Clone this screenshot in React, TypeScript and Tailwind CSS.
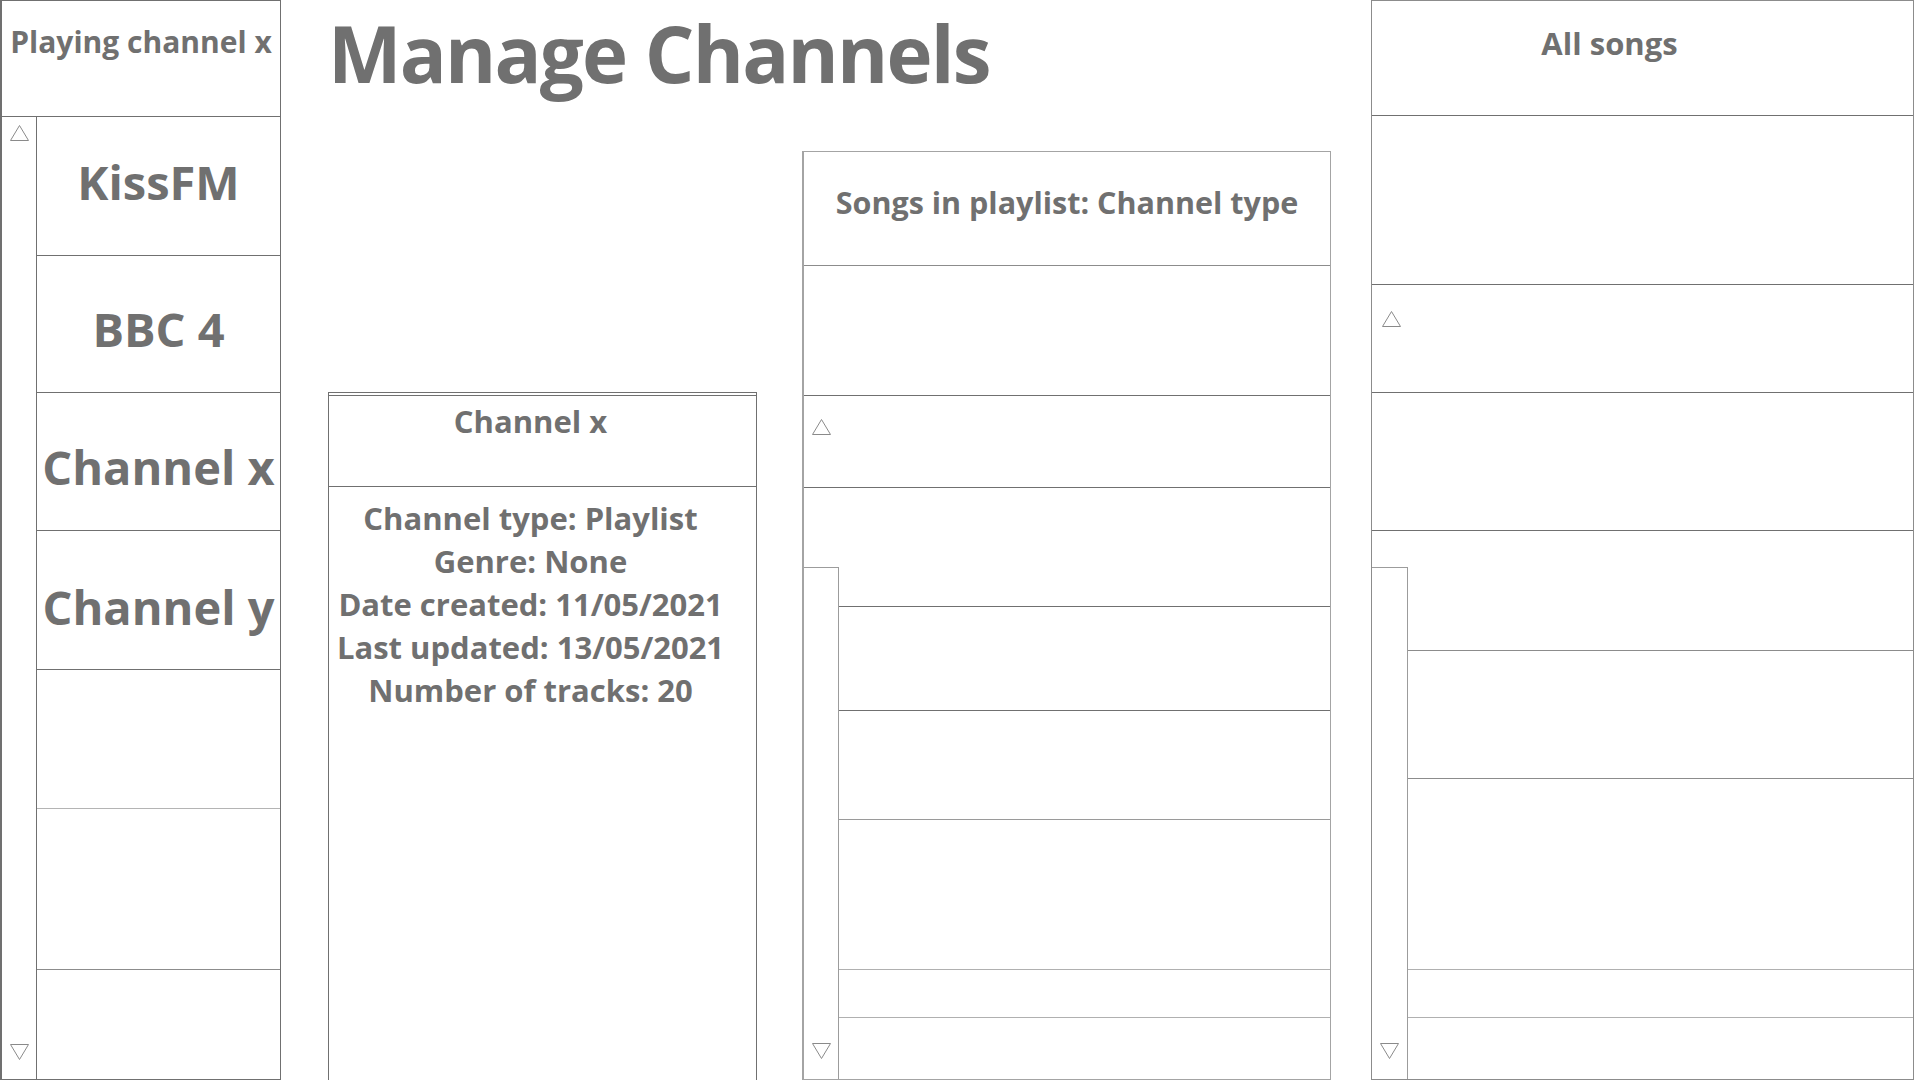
const UpArrow = () => (
  <svg width="19" height="16" viewBox="0 0 19 16" className="shrink-0">
    <polygon points="9.5,0.5 18.5,15.5 0.5,15.5" fill="none" stroke="#8a8a8a" strokeWidth="1" />
  </svg>
);

const DownArrow = () => (
  <svg width="19" height="16" viewBox="0 0 19 16" className="shrink-0">
    <polygon points="0.5,0.5 18.5,0.5 9.5,15.5" fill="none" stroke="#8a8a8a" strokeWidth="1" />
  </svg>
);

const channels = [
  { name: "KissFM", h: "h-[139px]", line: "border-[#707070]", pad: "pb-[8px]" },
  { name: "BBC 4", h: "h-[137px]", line: "border-[#707070]", pad: "pt-[10px]" },
  { name: "Channel x", h: "h-[138px]", line: "border-[#707070]", pad: "pt-[12px]" },
  { name: "Channel y", h: "h-[139px]", line: "border-[#707070]", pad: "pt-[14px]" },
  { name: "", h: "h-[139px]", line: "border-[#b4b4b4]", pad: "pt-0" },
  { name: "", h: "h-[161px]", line: "border-[#8c8c8c]", pad: "pt-0" },
];

const ChannelList = () => (
  <div className="w-[281px] h-full shrink-0 flex flex-col border border-l-2 border-[#707070]">
    <div className="h-[116px] shrink-0 border-b border-[#707070] pt-[26px] text-center text-[30px] font-bold leading-none">
      Playing channel x
    </div>
    <div className="flex flex-1 min-h-0">
      <div className="w-[35px] shrink-0 border-r border-[#707070] flex flex-col justify-between items-center pt-[8px] pb-[19px]">
        <UpArrow />
        <DownArrow />
      </div>
      <div className="flex-1 flex flex-col">
        {channels.map((c, i) => (
          <div
            key={i}
            className={`${c.h} ${c.pad} shrink-0 border-b ${c.line} flex items-center justify-center text-[47px] font-bold leading-none`}
          >
            {c.name}
          </div>
        ))}
        <div className="flex-1" />
      </div>
    </div>
  </div>
);

const ChannelInfo = () => (
  <div className="w-[429px] h-[688px] shrink-0 flex flex-col border-t border-x border-[#707070]">
    <div className="h-[92px] shrink-0 mt-[2px] border-t border-b border-[#707070] pt-[10px] pr-[24px] text-center text-[31px] font-bold leading-none">
      Channel x
    </div>
    <div className="pt-[10px] pr-[24px] text-center text-[31px] font-bold leading-[43px]">
      <p>Channel type: Playlist</p>
      <p>Genre: None</p>
      <p>Date created: 11/05/2021</p>
      <p>Last updated: 13/05/2021</p>
      <p>Number of tracks: 20</p>
    </div>
  </div>
);

const SongsInPlaylist = () => (
  <div className="w-[529px] h-full shrink-0 flex flex-col border border-l-2 border-[#a4a4a4]">
    <div className="h-[114px] shrink-0 border-b border-[#8c8c8c] pt-[35px] text-center text-[30.5px] font-bold leading-none">
      Songs in playlist: Channel type
    </div>
    <div className="h-[130px] shrink-0 border-b border-[#707070]" />
    <div className="h-[92px] shrink-0 border-b border-[#707070] pt-[23px] pl-[8px]">
      <UpArrow />
    </div>
    <div className="flex flex-1 min-h-0">
      <div className="w-[35px] shrink-0 flex flex-col">
        <div className="h-[79px] shrink-0" />
        <div className="flex-1 border-t border-r border-[#9c9c9c] flex flex-col justify-end items-center pb-[20px]">
          <DownArrow />
        </div>
      </div>
      <div className="flex-1 flex flex-col">
        <div className="h-[119px] shrink-0 border-b border-[#707070]" />
        <div className="h-[104px] shrink-0 border-b border-[#707070]" />
        <div className="h-[109px] shrink-0 border-b border-[#9a9a9a]" />
        <div className="h-[150px] shrink-0 border-b border-[#b0b0b0]" />
        <div className="h-[48px] shrink-0 border-b border-[#b0b0b0]" />
        <div className="flex-1" />
      </div>
    </div>
  </div>
);

const AllSongs = () => (
  <div className="ml-[40px] w-[543px] h-full shrink-0 flex flex-col border border-[#8c8c8c]">
    <div className="h-[115px] shrink-0 border-b border-[#707070] pt-[27px] pr-[66px] text-center text-[31px] font-bold leading-none">
      All songs
    </div>
    <div className="h-[169px] shrink-0 border-b border-[#707070]" />
    <div className="h-[108px] shrink-0 border-b border-[#707070] pt-[26px] pl-[10px]">
      <UpArrow />
    </div>
    <div className="h-[138px] shrink-0 border-b border-[#707070]" />
    <div className="flex flex-1 min-h-0">
      <div className="w-[36px] shrink-0 flex flex-col">
        <div className="h-[36px] shrink-0" />
        <div className="flex-1 border-t border-r border-[#9c9c9c] flex flex-col justify-end items-center pb-[20px]">
          <DownArrow />
        </div>
      </div>
      <div className="flex-1 flex flex-col">
        <div className="h-[120px] shrink-0 border-b border-[#8c8c8c]" />
        <div className="h-[128px] shrink-0 border-b border-[#8c8c8c]" />
        <div className="h-[191px] shrink-0 border-b border-[#b0b0b0]" />
        <div className="h-[48px] shrink-0 border-b border-[#b0b0b0]" />
        <div className="flex-1" />
      </div>
    </div>
  </div>
);

export default function App() {
  return (
    <div className="w-screen h-screen overflow-hidden bg-white flex text-[#707070] font-['Open_Sans',sans-serif]">
      <ChannelList />
      <div className="ml-[47px] w-[1003px] h-full shrink-0 flex flex-col">
        <div className="h-[151px] shrink-0">
          <h1 className="text-[78px] font-bold leading-[106px] tracking-[-1.8px]">Manage Channels</h1>
        </div>
        <div className="flex-1 flex items-end gap-[45px]">
          <ChannelInfo />
          <SongsInPlaylist />
        </div>
      </div>
      <AllSongs />
    </div>
  );
}
